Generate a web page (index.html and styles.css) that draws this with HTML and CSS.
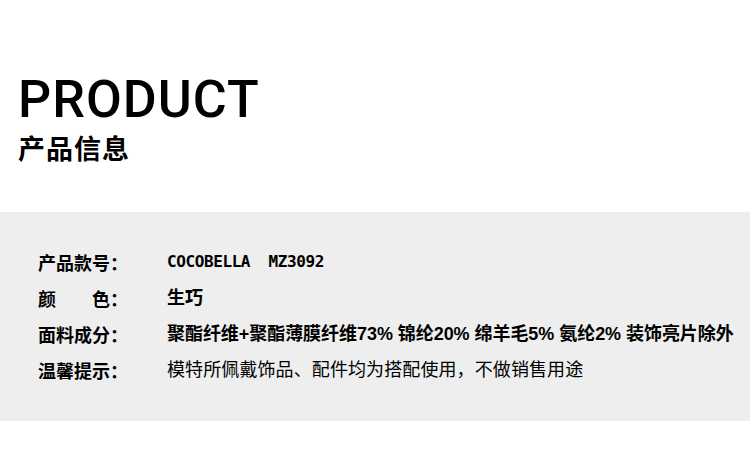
FILE: index.html
```html
<!DOCTYPE html>
<html lang="zh-CN">
<head>
<meta charset="utf-8">
<title>Product</title>
<link rel="stylesheet" href="styles.css">
</head>
<body>
<header class="head">
  <h1 class="title">PRODUCT</h1>
  <h2 class="subtitle">产品信息</h2>
</header>
<section class="info">
  <div class="row"><span class="label">产品款号：</span><span class="value bold code">COCOBELLA&nbsp;&nbsp;MZ3092</span></div>
  <div class="row"><span class="label">颜　　色：</span><span class="value bold">生巧</span></div>
  <div class="row"><span class="label">面料成分：</span><span class="value bold tight">聚酯纤维+聚酯薄膜纤维73% 锦纶20% 绵羊毛5% 氨纶2% 装饰亮片除外</span></div>
  <div class="row"><span class="label">温馨提示：</span><span class="value wide">模特所佩戴饰品、配件均为搭配使用，不做销售用途</span></div>
</section>
</body>
</html>
```
FILE: styles.css
```css
html, body {
  margin: 0;
  padding: 0;
  background: #ffffff;
  width: 750px;
  height: 464px;
  overflow: hidden;
}
body {
  font-family: "Noto Sans CJK SC", "Liberation Sans", sans-serif;
  color: #000;
}
.head {
  height: 212px;
  padding: 74px 0 0 18px;
  box-sizing: border-box;
}
.title {
  margin: 0;
  font-family: Roboto, "Liberation Sans", sans-serif;
  font-weight: 500;
  font-size: 52px;
  line-height: 52px;
  letter-spacing: 1px;
}
.subtitle {
  margin: 6px 0 0 0;
  font-family: "Noto Sans CJK SC", sans-serif;
  font-weight: 700;
  font-size: 27px;
  line-height: 32px;
  letter-spacing: 1px;
}
.info {
  background: #eeeeee;
  height: 209px;
  box-sizing: border-box;
  padding: 32px 0 32px 38px;
  display: flex;
  flex-direction: column;
}
.row {
  display: grid;
  grid-template-columns: 129px auto;
  height: 36px;
  align-items: center;
  font-size: 18px;
  line-height: 36px;
  white-space: nowrap;
}
.label {
  font-weight: 700;
}
.value {
  font-family: "Liberation Sans", "Noto Sans CJK SC", sans-serif;
  font-weight: 400;
}
.value.bold {
  font-weight: 700;
}
.value.code {
  font-family: "DejaVu Sans Mono", monospace;
  font-size: 16px;
  letter-spacing: -0.4px;
}
.value.tight {
  letter-spacing: -0.05px;
}
.value.wide {
  letter-spacing: 0.1px;
}
```
